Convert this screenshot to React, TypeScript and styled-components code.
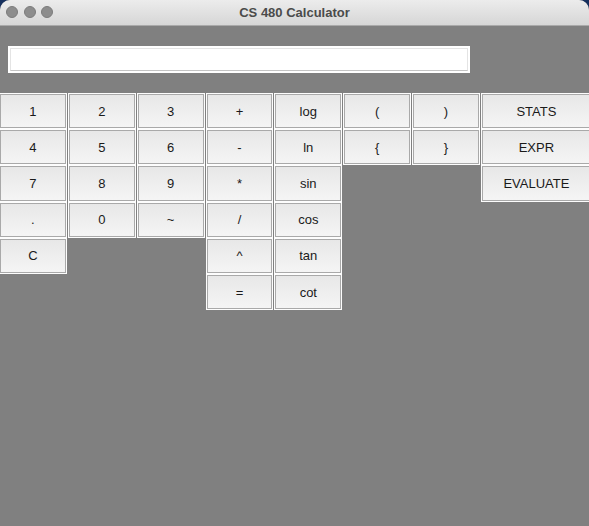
import React from "react";
import styled, { createGlobalStyle } from "styled-components";

const GlobalStyle = createGlobalStyle`
  html, body {
    margin: 0;
    padding: 0;
    background: #16305e;
    overflow: hidden;
  }
  * { box-sizing: border-box; }
`;

const Window = styled.div`
  width: 589px;
  height: 526px;
  background: #808080;
  border-radius: 10px 10px 0 0;
  overflow: hidden;
  display: flex;
  flex-direction: column;
  font-family: "Liberation Sans", Arial, sans-serif;
`;

const TitleBar = styled.div`
  position: relative;
  height: 26px;
  flex: none;
  background: linear-gradient(#ececec, #d6d6d6);
  border-bottom: 1px solid #a9a9a9;
  display: flex;
  align-items: center;
  justify-content: center;
`;

const Lights = styled.div`
  position: absolute;
  left: 6px;
  top: 6px;
  display: flex;
  gap: 5.5px;
`;

const Light = styled.span`
  width: 12px;
  height: 12px;
  border-radius: 50%;
  background: #8d8d8d;
  border: 1px solid #7c7c7c;
`;

const Title = styled.div`
  font-size: 13px;
  font-weight: bold;
  color: #4b4b4b;
  font-family: "Liberation Sans", Arial, sans-serif;
`;

const Content = styled.div`
  flex: 1;
  display: flex;
  flex-direction: column;
  padding-top: 20px;
`;

const FieldWrap = styled.div`
  margin-left: 8px;
  width: 462px;
  height: 27px;
  background: #fff;
  padding: 2px;
`;

const Field = styled.input`
  width: 100%;
  height: 100%;
  border: 1px solid #e4e4e4;
  border-bottom-color: #c4c4c4;
  outline: none;
  background: #fff;
  font-family: "Liberation Sans", Arial, sans-serif;
  font-size: 13px;
  padding: 0 4px;
`;

const Keypad = styled.div`
  display: flex;
  align-items: flex-start;
  margin-top: 20px;
  margin-left: -1px;
`;

const Column = styled.div<{ $wide?: boolean }>`
  display: flex;
  flex-direction: column;
  flex: none;
  width: ${(p) => (p.$wide ? "112px" : "68.85px")};
`;

const Key = styled.button`
  width: calc(100% - 1px);
  height: 36.2px;
  border: 1px solid #fdfdfd;
  box-shadow: inset 0 0 0 1px #a9a9a9;
  background: linear-gradient(#e7e7e7, #f5f5f5);
  font-family: "Liberation Sans", Arial, sans-serif;
  font-size: 13px;
  color: #1a1a1a;
  padding: 0;
  margin: 0;
  cursor: pointer;
`;

const columns: { keys: string[]; wide?: boolean }[] = [
  { keys: ["1", "4", "7", ".", "C"] },
  { keys: ["2", "5", "8", "0"] },
  { keys: ["3", "6", "9", "~"] },
  { keys: ["+", "-", "*", "/", "^", "="] },
  { keys: ["log", "ln", "sin", "cos", "tan", "cot"] },
  { keys: ["(", "{"] },
  { keys: [")", "}"] },
  { keys: ["STATS", "EXPR", "EVALUATE"], wide: true },
];

const App = () => {
  return (
    <>
      <GlobalStyle />
      <Window>
        <TitleBar>
          <Lights>
            <Light />
            <Light />
            <Light />
          </Lights>
          <Title>CS 480 Calculator</Title>
        </TitleBar>
        <Content>
          <FieldWrap>
            <Field type="text" />
          </FieldWrap>
          <Keypad>
            {columns.map((col, i) => (
              <Column key={i} $wide={col.wide}>
                {col.keys.map((k) => (
                  <Key key={k}>{k}</Key>
                ))}
              </Column>
            ))}
          </Keypad>
        </Content>
      </Window>
    </>
  );
};

export default App;
